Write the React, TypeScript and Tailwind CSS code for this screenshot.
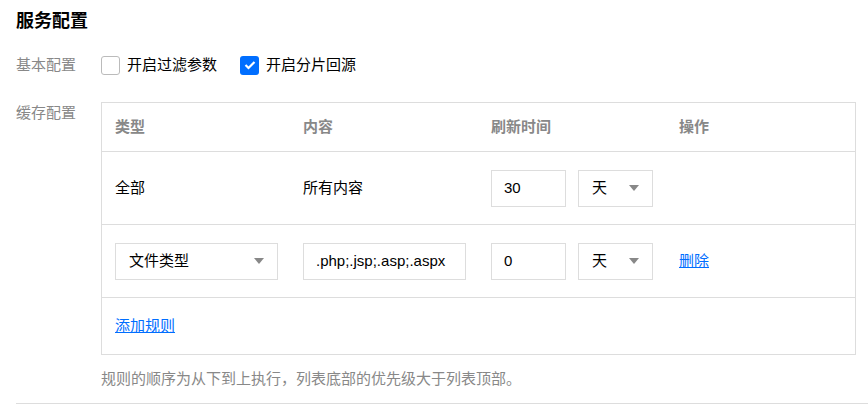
import { useState } from 'react';

const font = { fontFamily: '"Liberation Sans", "Noto Sans CJK SC", sans-serif' };

function Arrow() {
  return (
    <svg width="10" height="6" viewBox="0 0 10 6" className="shrink-0">
      <path d="M0 0 L10 0 L5 6 Z" fill="#888" />
    </svg>
  );
}

function Select({ value, width }: { value: string; width: string }) {
  return (
    <div className={`${width} h-[37px] border border-[#ddd] flex items-center justify-between pl-[13px] pr-[13px] text-[#000]`}>
      <span>{value}</span>
      <Arrow />
    </div>
  );
}

function Input({ value, width }: { value: string; width: string }) {
  return (
    <div className={`${width} h-[37px] border border-[#ddd] flex items-center pl-[12px] text-[#000]`}>
      {value}
    </div>
  );
}

function Checkbox({ checked, label, onClick }: { checked: boolean; label: string; onClick: () => void }) {
  return (
    <label className="flex items-center gap-[7px] cursor-pointer" onClick={onClick}>
      {checked ? (
        <span className="w-[19px] h-[19px] rounded-[3px] bg-[#006eff] flex items-center justify-center">
          <svg width="12" height="10" viewBox="0 0 12 10">
            <path d="M1.5 5 L4.5 8 L10.5 2" fill="none" stroke="#fff" strokeWidth="2.2" />
          </svg>
        </span>
      ) : (
        <span className="w-[19px] h-[19px] rounded-[3px] border border-[#bbb] bg-white" />
      )}
      <span className="text-[#000]">{label}</span>
    </label>
  );
}

export default function App() {
  const [filter, setFilter] = useState(false);
  const [slice, setSlice] = useState(true);

  return (
    <div className="w-[868px] h-[408px] bg-white text-[15px] leading-[20px] pl-4" style={font}>
      <h2 className="pt-[11px] text-[18px] leading-[20px] font-bold text-[#000]">服务配置</h2>

      <div className="mt-[24px] flex items-center h-[20px]">
        <div className="w-[85px] text-[#888]">基本配置</div>
        <div className="flex items-center gap-[23px]">
          <Checkbox checked={filter} label="开启过滤参数" onClick={() => setFilter(!filter)} />
          <Checkbox checked={slice} label="开启分片回源" onClick={() => setSlice(!slice)} />
        </div>
      </div>

      <div className="mt-[27px] flex">
        <div className="w-[85px] pt-[1px] text-[#888]">缓存配置</div>
        <div>
          <div className="w-[755px] border border-[#ddd]">
            <div className="h-[49px] border-b border-[#ddd] grid grid-cols-[188px_188px_188px_1fr] pl-[13px] items-center font-semibold text-[#888]">
              <div>类型</div>
              <div>内容</div>
              <div>刷新时间</div>
              <div>操作</div>
            </div>
            <div className="h-[73px] border-b border-[#ddd] grid grid-cols-[188px_188px_188px_1fr] pl-[13px] items-center text-[#000]">
              <div>全部</div>
              <div>所有内容</div>
              <div className="flex gap-[12px]">
                <Input value="30" width="w-[75px]" />
                <Select value="天" width="w-[75px]" />
              </div>
              <div />
            </div>
            <div className="h-[73px] border-b border-[#ddd] grid grid-cols-[188px_188px_188px_1fr] pl-[13px] items-center">
              <div>
                <Select value="文件类型" width="w-[163px]" />
              </div>
              <div>
                <Input value=".php;.jsp;.asp;.aspx" width="w-[163px]" />
              </div>
              <div className="flex gap-[12px]">
                <Input value="0" width="w-[75px]" />
                <Select value="天" width="w-[75px]" />
              </div>
              <div>
                <a href="#" className="text-[#006eff] underline">删除</a>
              </div>
            </div>
            <div className="h-[56px] flex items-center pl-[13px]">
              <a href="#" className="text-[#006eff] underline">添加规则</a>
            </div>
          </div>
          <p className="mt-[14px] text-[#888]">规则的顺序为从下到上执行，列表底部的优先级大于列表顶部。</p>
        </div>
      </div>

      <div className="mt-[14px] border-t border-[#ddd]" />
    </div>
  );
}
